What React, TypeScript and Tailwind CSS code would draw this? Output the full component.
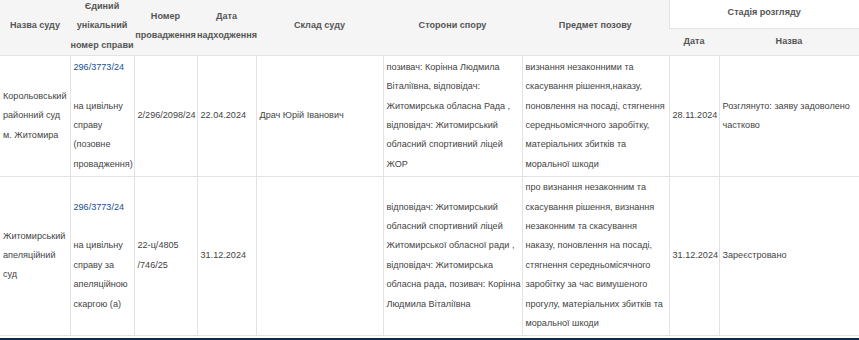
import React from "react";

const rows = [
  {
    court: "Корольовський районний суд м. Житомира",
    caseNo: "296/3773/24",
    caseNote: "на цивільну справу (позовне провадження)",
    procNo: "2/296/2098/24",
    received: "22.04.2024",
    judges: "Драч Юрій Іванович",
    parties:
      "позивач: Корінна Людмила Віталіївна, відповідач: Житомирська обласна Рада , відповідач: Житомирський обласний спортивний ліцей ЖОР",
    subject:
      "визнання незаконними та скасування рішення,наказу, поновлення на посаді, стягнення середньомісячного заробітку, матеріальних збитків та моральної шкоди",
    stageDate: "28.11.2024",
    stageName: "Розглянуто: заяву задоволено частково",
  },
  {
    court: "Житомирський апеляційний суд",
    caseNo: "296/3773/24",
    caseNote: "на цивільну справу за апеляційною скаргою (а)",
    procNo: "22-ц/4805 /746/25",
    received: "31.12.2024",
    judges: "",
    parties:
      "відповідач: Житомирський обласний спортивний ліцей Житомирської обласної ради , відповідач: Житомирська обласна рада, позивач: Корінна Людмила Віталіївна",
    subject:
      "про визнання незаконним та скасування рішення, визнання незаконним та скасування наказу, поновлення на посаді, стягнення середньомісячного заробітку за час вимушеного прогулу, матеріальних збитків та моральної шкоди",
    stageDate: "31.12.2024",
    stageName: "Зареєстровано",
  },
];

const th = "font-bold text-[#555] text-center align-middle px-0 py-0 leading-[19.4px] whitespace-nowrap";
const td = "border-l border-b border-[#e3e3e3] pl-[3px] pr-[1px] py-[1.5px] align-middle leading-[19.4px]";

export default function App() {
  return (
    <div
      className="w-[859px] h-[340px] overflow-hidden bg-white text-[#444] text-[9.1px]"
      style={{ fontFamily: '"Liberation Sans", Arial, sans-serif' }}
    >
      <table className="-mt-[3px] w-full table-fixed border-collapse">
        <colgroup>
          <col className="w-[70px]" />
          <col className="w-[64px]" />
          <col className="w-[63px]" />
          <col className="w-[59px]" />
          <col className="w-[127px]" />
          <col className="w-[139px]" />
          <col className="w-[147px]" />
          <col className="w-[50px]" />
          <col />
        </colgroup>
        <thead className="bg-[#f5f5f5]">
          <tr>
            <th rowSpan={2} className={th}>Назва суду</th>
            <th rowSpan={2} className={th}>
              Єдиний
              <br />
              унікальний
              <br />
              номер справи
            </th>
            <th rowSpan={2} className={th}>
              Номер
              <br />
              провадження
            </th>
            <th rowSpan={2} className={th}>
              Дата
              <br />
              надходження
            </th>
            <th rowSpan={2} className={th}>Склад суду</th>
            <th rowSpan={2} className={th}>Сторони спору</th>
            <th rowSpan={2} className={th}>Предмет позову</th>
            <th colSpan={2} className={`${th} h-[31px] bg-white border-l border-b border-[#e3e3e3]`}>
              Стадія розгляду
            </th>
          </tr>
          <tr className="border-b border-[#e3e3e3]">
            <th className={`${th} h-[27px]`}>Дата</th>
            <th className={`${th} h-[27px]`}>Назва</th>
          </tr>
        </thead>
        <tbody>
          {rows.map((r, i) => (
            <tr key={i}>
              <td className={`${td} border-l-0`}>{r.court}</td>
              <td className={td}>
                <a href="#" className="text-[#1d4e89]">{r.caseNo}</a>
                <br />
                <br />
                {r.caseNote}
              </td>
              <td className={td}>{r.procNo}</td>
              <td className={td}>{r.received}</td>
              <td className={td}>{r.judges}</td>
              <td className={td}>{r.parties}</td>
              <td className={td}>{r.subject}</td>
              <td className={td}>{r.stageDate}</td>
              <td className={td}>{r.stageName}</td>
            </tr>
          ))}
        </tbody>
      </table>
      <div className="mt-[2px] h-[4px] bg-[#0d2b4e]" />
    </div>
  );
}
